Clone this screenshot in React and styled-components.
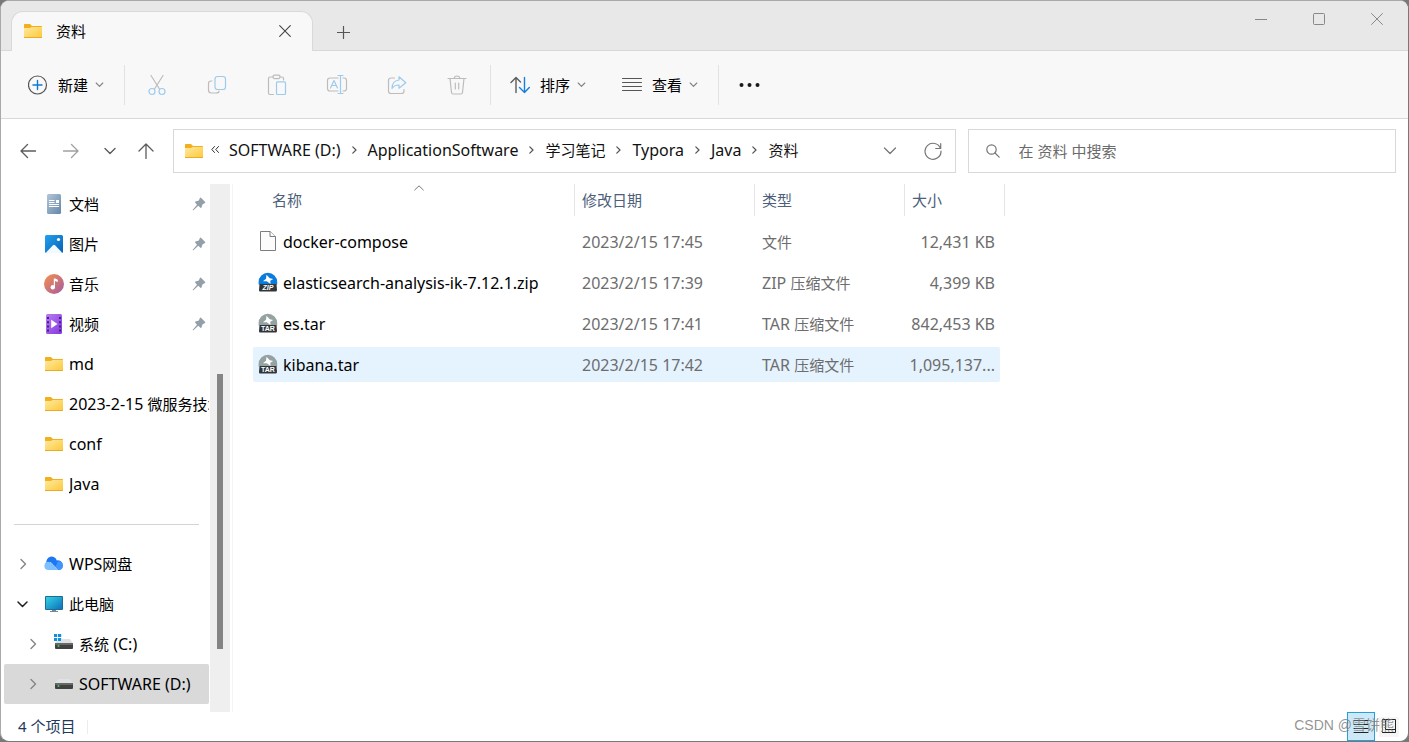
import React from 'react'
import styled, { createGlobalStyle } from 'styled-components'

const GlobalStyle = createGlobalStyle`
  * {
    box-sizing: border-box;
  }
  body {
    margin: 0;
    background-color: #77787a;
    color: #000;
    font-family: 'Noto Sans', 'Noto Sans CJK SC', sans-serif;
    font-size: 15px;
    line-height: 20px;
  }
  button, input {
    margin: 0;
    padding: 0;
    border: none;
    background: none;
    color: inherit;
    font: inherit;
  }
  svg {
    display: block;
    flex: none;
  }
`
const Window = styled.div`
  position: relative;
  display: flex;
  flex-direction: column;
  min-height: 100vh;
  border: 1px solid #a9a9a9;
  border-right-color: #77787a;
  border-bottom-color: #77787a;
  border-radius: 9px;
  background-color: #fff;
  overflow: hidden;
`
const Latin = styled.span`
  font-size: 16px;
`

/* title bar */
const TitleBar = styled.header`
  display: flex;
  align-items: flex-end;
  height: 50px;
  padding-left: 10px;
  background-color: #e8e8e8;
  box-shadow: inset 0 -1px #d9d9d9;
`
const Tab = styled.div`
  display: flex;
  align-items: center;
  width: 302px;
  height: 40px;
  padding: 0 21px 2px 11px;
  border: 1px solid #d9d9d9;
  border-bottom: none;
  border-radius: 12px 12px 0 0;
  background-color: #f8f8f8;
`
const TabTitle = styled.span`
  flex: 1;
  margin-left: 13px;
`
const NewTabButton = styled.button`
  display: grid;
  place-items: center;
  width: 40px;
  height: 38px;
  margin-left: 10px;
`
const Caption = styled.div`
  display: flex;
  align-self: flex-start;
  margin-left: auto;
  padding-right: 2px;
`
const CaptionButton = styled.button`
  display: grid;
  place-items: center;
  width: 58px;
  height: 36px;
`

/* toolbar */
const Toolbar = styled.div`
  display: flex;
  align-items: center;
  height: 68px;
  padding: 0 26px 0 27px;
  border-bottom: 1px solid #d9d9d9;
  background-color: #f8f8f8;
`
const MenuButton = styled.button`
  display: flex;
  align-items: center;
  gap: 10px;
  height: 40px;
  margin-right: ${({ $last }) => $last ? '0' : '36px'};

  svg:last-child {
    margin-left: -3px;
  }
`
const ToolButton = styled.button`
  display: grid;
  place-items: center;
  width: 60px;
  height: 40px;
`
const ToolGroup = styled.div`
  display: flex;
  padding: 0 3px 0 2px;
`
const Divider = styled.div`
  width: 1px;
  height: 40px;
  margin: 0 ${({ $after }) => $after}px 0 ${({ $before }) => $before}px;
  background-color: #e2e2e2;
`

/* address row */
const AddressRow = styled.div`
  display: flex;
  align-items: center;
  height: 65px;
  padding: 0 12px 2px 5px;
`
const NavButton = styled.button`
  display: grid;
  place-items: center;
  width: ${({ $narrow }) => $narrow ? '36px' : '43px'};
  height: 40px;
`
const AddressBox = styled.nav`
  display: flex;
  flex: 29 1 0;
  align-items: center;
  min-width: 0;
  height: 44px;
  margin: 0 12px 0 9px;
  padding: 0 12px 0 10px;
  border: 1px solid #d9d9d9;
`
const Crumbs = styled.ol`
  display: flex;
  flex: 1;
  align-items: center;
  margin: 0;
  padding: 0 0 2px 7px;
  list-style: none;
  white-space: nowrap;
`
const Crumb = styled.li`
  display: flex;
  align-items: center;
`
const Overflow = styled.span`
  margin-right: 10px;
`
const Separator = styled.span`
  margin: 0 11px;
`
const CrumbLink = styled.a`
  color: #111;
  text-decoration: none;
`
const BoxButton = styled.button`
  display: grid;
  place-items: center;
  width: ${({ $wide }) => $wide ? '66px' : '20px'};
  height: 40px;
`
const SearchBox = styled.label`
  display: flex;
  flex: 15 1 0;
  align-items: center;
  min-width: 0;
  height: 44px;
  padding: 0 17px;
  border: 1px solid #d9d9d9;
`
const SearchInput = styled.input`
  flex: 1;
  min-width: 0;
  margin-left: 19px;
  outline: none;

  &::placeholder {
    color: #6a6a6a;
    opacity: 1;
  }
`

/* body */
const Body = styled.div`
  display: flex;
  flex: 1;
`
const Sidebar = styled.aside`
  flex: none;
  width: 208px;
  padding-left: 3px;
`
const Tree = styled.ul`
  margin: 0;
  padding: 0;
  list-style: none;
`
const TreeItem = styled.li`
  display: flex;
  align-items: center;
  height: 40px;
  padding-left: ${({ $level }) => $level * 10 + 9}px;
  padding-right: ${({ $pinned }) => $pinned ? '3px' : '0'};
  border-radius: 2px;
  background-color: ${({ $selected }) => $selected ? '#d9d9d9' : 'transparent'};
`
const Expander = styled.button`
  flex: none;
  width: 31px;
  height: 12px;
  padding-left: 4px;
`
const TreeLabel = styled.span`
  flex: 1;
  margin-left: 5px;
  overflow: hidden;
  white-space: nowrap;
`
const TreeLine = styled.hr`
  height: 1px;
  margin: 20px 10px 19px;
  border: none;
  background-color: #d4d4d4;
`
const Track = styled.div`
  flex: none;
  width: 20px;
  margin-left: 1px;
  padding: 190px 7px 0;
  background-color: #efefef;
`
const Thumb = styled.div`
  width: 6px;
  height: 275px;
  background-color: #858585;
`
const Main = styled.main`
  flex: 1;
  min-width: 0;
  margin-left: 2px;
  padding-left: 20px;
  border-left: 1px solid #f5f5f5;
`
const FileTable = styled.table`
  display: block;
`
const Head = styled.thead`
  display: block;
`
const FileList = styled.tbody`
  display: flex;
  flex-direction: column;
  gap: 6px;
  padding-top: 8px;
`
const HeadRow = styled.tr`
  display: grid;
  grid-template-columns: 322px 180px 150px 100px;
  height: 32px;
`
const HeadCell = styled.th`
  position: relative;
  display: flex;
  align-items: center;
  padding: 0 0 0 ${({ $first }) => $first ? '19px' : '7px'};
  border-right: 1px solid #e5e5e5;
  color: #4c607a;
  font-weight: 400;
`
const SortMark = styled.span`
  position: absolute;
  top: 1px;
  left: 50%;
`
const FileRow = styled.tr`
  display: grid;
  grid-template-columns: 322px 180px 150px 95px;
  width: 747px;
  height: 35px;
  border-radius: 2px;
  background-color: ${({ $hovered }) => $hovered ? '#e5f3ff' : 'transparent'};
`
const Cell = styled.td`
  padding: 8px 0 0 7px;
  color: #6d6d6d;
  white-space: nowrap;
`
const NameCell = styled(Cell)`
  display: flex;
  align-items: flex-start;
  gap: 5px;
  padding-left: 5px;
  color: #000;

  svg {
    margin-top: -1px;
  }
`
const SizeCell = styled(Cell)`
  padding-right: 5px;
  padding-left: 0;
  text-align: right;
`

/* status bar */
const StatusBar = styled.footer`
  display: flex;
  align-items: center;
  height: 29px;
  padding: 0 8px 0 17px;
  color: #1e395b;
`
const StatusText = styled.span`
  padding-bottom: 2px;
`
const StatusDivider = styled.span`
  width: 1px;
  height: 14px;
  margin-left: 12px;
  background-color: #ececec;
`
const ViewButtons = styled.div`
  display: flex;
  align-items: center;
  gap: 4px;
  margin-left: auto;
`
const ViewButton = styled.button`
  display: grid;
  place-items: center;
  width: ${({ $active }) => $active ? '28px' : '20px'};
  height: ${({ $active }) => $active ? '29px' : '20px'};
  margin-right: ${({ $active }) => $active ? '0' : '1px'};
  padding-bottom: 2px;
  border: ${({ $active }) => $active ? '1px solid #26a0da' : 'none'};
  background-color: ${({ $active }) => $active ? '#cde9f7' : '#f5f5f5'};
`
const Watermark = styled.span`
  position: absolute;
  right: 14px;
  bottom: 6px;
  color: rgba(120, 120, 120, 0.8);
  font-family: 'Liberation Sans', 'Noto Sans CJK SC', sans-serif;
  font-size: 14px;
  pointer-events: none;
`

const Stroke = ({ w, h, d, color = '#5c5c5c', width = 1.2, children }) => (
  <svg width={w} height={h} viewBox={`0 0 ${w} ${h}`} fill='none' stroke={color} strokeWidth={width} strokeLinecap='round' strokeLinejoin='round'>
    {d && <path d={d} />}
    {children}
  </svg>
)

const GREY = '#bcbcbc'
const BLUE = '#9ccbee'

const ChevronDown = () => <Stroke w={9} h={6} d='M1.200 1L4.500 4.300L7.800 1' color='#808080' width={1.1} />
const BigChevron = () => <Stroke w={14} h={8} d='M1.500 1L7 6.500L12.500 1' color='#777' width={1.3} />
const CrumbChevron = () => <Stroke w={5} h={8} d='M.8 .8L4 4L.8 7.200' color='#555' width={1.2} />
const TreeChevron = () => <Stroke w={12} h={12} d='M4 1.500L8.500 6L4 10.500' color='#858585' width={1.4} />
const TreeChevronOpen = () => <Stroke w={12} h={12} d='M1 4L5.500 8.500L10 4' color='#222' width={1.5} />

const FolderIcon = () => (
  <svg width='20' height='20' viewBox='0 0 20 20'>
    <defs>
      <linearGradient id='folder' x1='0' y1='0' x2='1' y2='1'>
        <stop offset='0' stopColor='#ffe9a0' />
        <stop offset='1' stopColor='#fcc838' />
      </linearGradient>
    </defs>
    <path d='M1 3.600Q1 3 1.600 3H7L9 5H18.400Q19 5 19 5.600V10H1Z' fill='#f2b01e' />
    <path d='M1 7H7L8.500 6H19V16.400Q19 17 18.400 17H1.600Q1 17 1 16.400Z' fill='url(#folder)' />
    <path d='M1 16.500H19' stroke='#e9ac2a' />
  </svg>
)
const DocumentIcon = () => (
  <svg width='20' height='20' viewBox='0 0 20 20'>
    <defs>
      <linearGradient id='doc' x1='0' y1='0' x2='1' y2='1'>
        <stop offset='0' stopColor='#b3c6da' />
        <stop offset='1' stopColor='#6486a8' />
      </linearGradient>
    </defs>
    <rect x='3' width='14' height='20' rx='1.500' fill='url(#doc)' />
    <path d='M5 6.500H10.500M5 8.500H10.500M5 10.500H15M5 12.500H15' stroke='#fff' />
    <rect x='12' y='6' width='3' height='3' fill='#fff' />
  </svg>
)
const PictureIcon = () => (
  <svg width='20' height='20' viewBox='0 0 20 20'>
    <defs>
      <linearGradient id='pic' x1='0' y1='0' x2='1' y2='1'>
        <stop offset='0' stopColor='#22a2ee' />
        <stop offset='1' stopColor='#0860b4' />
      </linearGradient>
    </defs>
    <rect x='1' y='1' width='18' height='18' rx='1.500' fill='url(#pic)' />
    <path d='M2 18.500L9 11.300Q10 10.300 11 11.300L18 18.500Q17.500 19 17 19H3Q2.500 19 2 18.500Z' fill='#f2f9ff' />
    <circle cx='14.500' cy='5.500' r='1.600' fill='#fff' />
  </svg>
)
const MusicIcon = () => (
  <svg width='20' height='20' viewBox='0 0 20 20'>
    <defs>
      <linearGradient id='music' x1='0' y1='0' x2='1' y2='1'>
        <stop offset='.1' stopColor='#ee8c52' />
        <stop offset='1' stopColor='#a55aa4' />
      </linearGradient>
    </defs>
    <circle cx='10' cy='10' r='10' fill='url(#music)' />
    <circle cx='8.800' cy='13.200' r='2.200' fill='#fff' />
    <path d='M9.800 4.500H11.300L13.800 5.800V8L11 7V13.200H9.800Z' fill='#fff' />
  </svg>
)
const VideoIcon = () => (
  <svg width='20' height='20' viewBox='0 0 20 20'>
    <defs>
      <linearGradient id='video' x1='0' y1='0' x2='1' y2='1'>
        <stop offset='0' stopColor='#b77cf2' />
        <stop offset='1' stopColor='#8439dd' />
      </linearGradient>
    </defs>
    <rect x='2' width='16' height='20' rx='1.500' fill='url(#video)' />
    <path d='M4 3V18M16 3V18' stroke='#45207f' strokeWidth='2' strokeDasharray='2 2.200' />
    <path d='M7.200 5.800L13.500 10L7.200 14.200Z' fill='#fff' />
  </svg>
)
const CloudIcon = () => (
  <svg width='20' height='20' viewBox='0 0 20 20'>
    <path d='M2.500 9.500A5.300 5.300 0 0 1 12.800 6.500A4.800 4.800 0 0 1 15 16H6Z' fill='#1c78f2' />
    <path d='M14 7.300A4.400 4.400 0 0 1 15.300 16H10Z' fill='#3e95ff' />
    <path d='M4.500 16A4.100 4.100 0 0 1 4.500 7.800Q7 8 9 11L13 16Z' fill='#7fc0ff' />
    <path d='M6 8.300Q8.500 9.300 13.500 16' stroke='#e8f4ff' strokeWidth='.6' fill='none' />
  </svg>
)
const ComputerIcon = () => (
  <svg width='20' height='20' viewBox='0 0 20 20'>
    <defs>
      <linearGradient id='pc' x1='0' y1='0' x2='1' y2='1'>
        <stop offset='0' stopColor='#35d3e2' />
        <stop offset='1' stopColor='#0d70bd' />
      </linearGradient>
    </defs>
    <path d='M8 15H12V17H14V18H6V17H8Z' fill='#7b8790' />
    <rect x='1' y='2' width='18' height='14' rx='1' fill='#1b6c97' />
    <rect x='2' y='3' width='16' height='12' fill='url(#pc)' />
  </svg>
)
const DriveIcon = ({ system }) => (
  <svg width='20' height='20' viewBox='0 0 20 20'>
    <path d='M4 5H16L19 9.500H1Z' fill='#dfe1e3' />
    <rect x='1' y='9' width='18' height='6' rx='1' fill='#414141' />
    <rect x='1' y='9' width='18' height='2' rx='1' fill='#686868' />
    <circle cx='4.500' cy='12' r='1' fill='#3fd06c' />
    {system && <path d='M0 -1H8V7H0Z' fill='#fff' />}
    {system && <path d='M0 0H3.200V3H0ZM4 0H7.200V3H4ZM0 4H3.200V7H0ZM4 4H7.200V7H4Z' fill='#128fdc' />}
  </svg>
)
const PinIcon = () => (
  <svg width='14' height='14' viewBox='0 0 14 14'>
    <path d='M8 .8Q8.500 .4 9 .8L13.200 5Q13.500 5.500 13 5.900L10.600 7.200L9.500 10.600Q9 11.200 8.400 10.700L6.300 8.800L1.200 13.500L.6 12.900L5 7.700L3.200 5.700Q2.800 5 3.500 4.600L6.800 3.500Z' fill='#93a0a9' />
  </svg>
)
const FileIcon = () => (
  <svg width='20' height='20' viewBox='0 0 20 20' fill='#fcfcfc' stroke='#7d7d7d'>
    <path d='M2.500 .5H12L17.500 5.500V19.500H2.500Z' />
    <path d='M12 .5V5.500H17.500' />
  </svg>
)
const ArchiveIcon = ({ kind }) => (
  <svg width='20' height='20' viewBox='0 0 20 20'>
    <path d='M.6 12.500V10A9.300 9.300 0 0 1 19.200 10V12.500Z' fill={kind === 'ZIP' ? '#0b7bdc' : '#94a2a1'} />
    <path d='M8.500 2.800L11.800 6.200L15.200 7L12.300 8.800L12.500 12L8.800 9.300L5 9.300L8 6.800Z' fill='#fff' />
    <path d='M1.500 12H18.500L19 18Q19 19.500 17.500 19.500H2.200Q.8 19.500 1 18Z' fill='#30363a' />
    <text
      x='10'
      y='18.300'
      textAnchor='middle'
      fill='#fff'
      fontFamily='Liberation Sans, sans-serif'
      fontSize='7'
      fontWeight='700'
      fontStyle={kind === 'ZIP' ? 'italic' : 'normal'}
    >
      {kind}
    </text>
  </svg>
)

const quickAccess = [
  { name: '文档', icon: <DocumentIcon />, pinned: true },
  { name: '图片', icon: <PictureIcon />, pinned: true },
  { name: '音乐', icon: <MusicIcon />, pinned: true },
  { name: '视频', icon: <VideoIcon />, pinned: true },
  { name: 'md', icon: <FolderIcon /> },
  { name: '2023-2-15 微服务技术', icon: <FolderIcon /> },
  { name: 'conf', icon: <FolderIcon /> },
  { name: 'Java', icon: <FolderIcon /> }
]

const drives = [
  { name: 'WPS网盘', icon: <CloudIcon />, expandable: true },
  { name: '此电脑', icon: <ComputerIcon />, expandable: true, open: true },
  { name: '系统 (C:)', icon: <DriveIcon system />, level: 1, expandable: true },
  { name: 'SOFTWARE (D:)', icon: <DriveIcon />, level: 1, expandable: true, selected: true }
]

const crumbs = ['SOFTWARE (D:)', 'ApplicationSoftware', '学习笔记', 'Typora', 'Java', '资料']

const files = [
  { name: 'docker-compose', date: '2023/2/15 17:45', type: '文件', size: '12,431 KB' },
  { name: 'elasticsearch-analysis-ik-7.12.1.zip', date: '2023/2/15 17:39', kind: 'ZIP', type: 'ZIP 压缩文件', size: '4,399 KB' },
  { name: 'es.tar', date: '2023/2/15 17:41', kind: 'TAR', type: 'TAR 压缩文件', size: '842,453 KB' },
  { name: 'kibana.tar', date: '2023/2/15 17:42', kind: 'TAR', type: 'TAR 压缩文件', size: '1,095,137...', hovered: true }
]

// Latin runs are set one size above the Chinese ones so both look equally large
const Mixed = ({ children }) => children.split(/([\u4e00-\u9fff]+)/).filter(Boolean).map((part, i) => (
  /[\u4e00-\u9fff]/.test(part) ? part : <Latin key={i}>{part}</Latin>
))

const TreeNode = ({ name, icon, level = 0, pinned, expandable, open, selected }) => (
  <TreeItem $level={level} $pinned={pinned} $selected={selected}>
    <Expander as={expandable ? 'button' : 'span'} aria-label={expandable ? name : undefined}>
      {expandable && (open ? <TreeChevronOpen /> : <TreeChevron />)}
    </Expander>
    {icon}
    <TreeLabel><Mixed>{name}</Mixed></TreeLabel>
    {pinned && <PinIcon />}
  </TreeItem>
)

const TitleSection = () => (
  <TitleBar>
    <Tab>
      <FolderIcon />
      <TabTitle>资料</TabTitle>
      <button aria-label='关闭标签页'>
        <Stroke w={12} h={12} d='M.7 .7L11.300 11.300M11.300 .7L.7 11.300' color='#444' width={1.1} />
      </button>
    </Tab>
    <NewTabButton aria-label='新标签页'>
      <Stroke w={13} h={13} d='M6.500 .5V12.500M.5 6.500H12.500' color='#555' />
    </NewTabButton>
    <Caption>
      <CaptionButton aria-label='最小化'><Stroke w={12} h={12} d='M0 6.500H12' color='#888' width={1} /></CaptionButton>
      <CaptionButton aria-label='最大化'>
        <Stroke w={12} h={12} color='#888' width={1}><rect x='.5' y='.5' width='11' height='11' rx='1' /></Stroke>
      </CaptionButton>
      <CaptionButton aria-label='关闭'><Stroke w={12} h={12} d='M.5 .5L11.500 11.500M11.500 .5L.5 11.500' color='#888' width={1} /></CaptionButton>
    </Caption>
  </TitleBar>
)

const ToolbarSection = () => (
  <Toolbar>
    <MenuButton $last>
      <Stroke w={20} h={20} color='#555'>
        <circle cx='9.500' cy='10' r='9' />
        <path d='M9.500 5.500V14.500M5 10H14' stroke='#0f78d0' strokeWidth='1.4' />
      </Stroke>
      新建
      <ChevronDown />
    </MenuButton>
    <Divider $before={20} $after={0} />
    <ToolGroup>
      <ToolButton aria-label='剪切'>
        <Stroke w={20} h={22} color={GREY}>
          <path d='M4 1.500L12.500 15M16 1.500L7.500 15' />
          <circle cx='5' cy='17.500' r='3' stroke={BLUE} />
          <circle cx='15' cy='17.500' r='3' stroke={BLUE} />
        </Stroke>
      </ToolButton>
      <ToolButton aria-label='复制'>
        <Stroke w={20} h={20} color={GREY}>
          <path d='M5 6H4Q1.500 6 1.500 8.500V15Q1.500 18 4.500 18H9Q12 18 12 16' />
          <rect x='8' y='1.500' width='10.500' height='13' rx='2.500' stroke={BLUE} />
        </Stroke>
      </ToolButton>
      <ToolButton aria-label='粘贴'>
        <Stroke w={20} h={22} color={GREY}>
          <path d='M6 3H3Q1.500 3 1.500 4.500V19Q1.500 20.500 3 20.500H6.500M13 3H15Q16.500 3 16.500 4.500V6' />
          <rect x='6' y='1.200' width='7' height='3.400' rx='1.500' />
          <rect x='9.500' y='7.800' width='9' height='12.700' rx='1' stroke={BLUE} />
        </Stroke>
      </ToolButton>
      <ToolButton aria-label='重命名'>
        <Stroke w={22} h={22} color={GREY}>
          <path d='M12 4H4Q1.500 4 1.500 6.500V14.500Q1.500 17 4 17H12M17 4H18Q20.500 4 20.500 6.500V14.500Q20.500 17 18 17H17' />
          <path d='M4.500 14L8 6.500L11.500 14M5.700 11.500H10.300M14.500 1.500V19.500M12 1.500H17M12 19.500H17' stroke={BLUE} />
        </Stroke>
      </ToolButton>
      <ToolButton aria-label='共享'>
        <Stroke w={20} h={20} color={GREY}>
          <path d='M7.500 3H4Q1.500 3 1.500 5.500V16Q1.500 18.500 4 18.500H14.500Q17 18.500 17 16V14.500' />
          <path d='M12 5V1.800L18.800 7.700L12 13.200V10Q7.500 9.800 5 13.500Q5 5.800 12 5Z' stroke={BLUE} />
        </Stroke>
      </ToolButton>
      <ToolButton aria-label='删除'>
        <Stroke w={20} h={20} color={GREY}>
          <path d='M1 3.500H19M7 3.500Q7.500 1 10 1T13 3.500M3 3.500L4.500 17.500Q4.700 19 6 19H14Q15.300 19 15.500 17.500L17 3.500M8.300 8V14M11.700 8V14' />
        </Stroke>
      </ToolButton>
    </ToolGroup>
    <Divider $before={0} $after={19} />
    <MenuButton>
      <Stroke w={20} h={18} width={1.4}>
        <path d='M6 16.500V1.500M1 6.500L6 1.500L10.500 6' />
        <path d='M14.500 1.500V16.500M9.500 11.500L14.500 16.500L19.300 11.500' stroke='#1580dc' />
      </Stroke>
      排序
      <ChevronDown />
    </MenuButton>
    <MenuButton $last>
      <Stroke w={20} h={14} d='M.5 .5H19.500M.5 4.500H19.500M.5 8.500H19.500M.5 12.500H19.500' width={1} color='#555' />
      查看
      <ChevronDown />
    </MenuButton>
    <Divider $before={20} $after={20} />
    <button aria-label='更多'>
      <svg width='21' height='6' viewBox='0 0 21 6' fill='#1a1a1a'>
        <circle cx='2.500' cy='3' r='2' />
        <circle cx='10.500' cy='3' r='2' />
        <circle cx='18.500' cy='3' r='2' />
      </svg>
    </button>
  </Toolbar>
)

const AddressSection = () => (
  <AddressRow>
    <NavButton aria-label='后退'><Stroke w={16} h={16} d='M15.500 8H1M7.500 1.500L1 8L7.500 14.500' width={1.3} /></NavButton>
    <NavButton aria-label='前进'><Stroke w={16} h={16} d='M.5 8H15M8.500 1.500L15 8L8.500 14.500' color='#a0a0a0' width={1.3} /></NavButton>
    <NavButton $narrow aria-label='最近位置'><Stroke w={12} h={8} d='M1 1.500L6 6.500L11 1.500' width={1.4} /></NavButton>
    <NavButton $narrow aria-label='向上'><Stroke w={16} h={16} d='M8 15.500V1M1 8L8 1L15 8' width={1.3} /></NavButton>
    <AddressBox>
      <FolderIcon />
      <Crumbs>
        {crumbs.map((crumb, i) => (
          <Crumb key={crumb}>
            {i === 0
              ? <Overflow><Stroke w={8} h={8} d='M3.500 .5L.8 3.500L3.500 6.500M7.500 .5L4.800 3.500L7.500 6.500' color='#333' width={1} /></Overflow>
              : <Separator><CrumbChevron /></Separator>}
            <CrumbLink href='#'><Mixed>{crumb}</Mixed></CrumbLink>
          </Crumb>
        ))}
      </Crumbs>
      <BoxButton $wide aria-label='历史记录'><BigChevron /></BoxButton>
      <BoxButton aria-label='刷新'>
        <Stroke w={18} h={18} d='M16.500 6.500A8 8 0 1 0 17 9M16.700 1.500V6.500H11.700' color='#777' />
      </BoxButton>
    </AddressBox>
    <SearchBox>
      <Stroke w={14} h={14} color='#777'>
        <circle cx='5.500' cy='5.500' r='4.700' />
        <path d='M9 9L13.200 13.200' />
      </Stroke>
      <SearchInput type='search' placeholder='在 资料 中搜索' aria-label='搜索' />
    </SearchBox>
  </AddressRow>
)

const FileSection = () => (
  <Main>
    <FileTable>
      <Head>
        <HeadRow>
          <HeadCell $first>名称<SortMark><Stroke w={10} h={6} d='M.7 5L5 .8L9.300 5' color='#777' width={1} /></SortMark></HeadCell>
          <HeadCell>修改日期</HeadCell>
          <HeadCell>类型</HeadCell>
          <HeadCell>大小</HeadCell>
        </HeadRow>
      </Head>
      <FileList>
        {files.map(({ name, date, kind, type, size, hovered }) => (
          <FileRow key={name} $hovered={hovered}>
            <NameCell>
              {kind ? <ArchiveIcon kind={kind} /> : <FileIcon />}
              <Latin>{name}</Latin>
            </NameCell>
            <Cell><Latin>{date}</Latin></Cell>
            <Cell><Mixed>{type}</Mixed></Cell>
            <SizeCell><Latin>{size}</Latin></SizeCell>
          </FileRow>
        ))}
      </FileList>
    </FileTable>
  </Main>
)

export default function App() {
  return (
    <>
      <GlobalStyle />
      <Window>
        <TitleSection />
        <ToolbarSection />
        <AddressSection />
        <Body>
          <Sidebar>
            <Tree>
              {quickAccess.map(item => <TreeNode key={item.name} {...item} />)}
            </Tree>
            <TreeLine />
            <Tree>
              {drives.map(item => <TreeNode key={item.name} {...item} />)}
            </Tree>
          </Sidebar>
          <Track><Thumb /></Track>
          <FileSection />
        </Body>
        <StatusBar>
          <StatusText>4 个项目</StatusText>
          <StatusDivider />
          <ViewButtons>
            <ViewButton $active aria-label='详细信息'>
              <Stroke w={16} h={14} d='M1 1.500H15M1 5.500H15M1 9.500H15M1 13.500H15' color='#222' width={1} />
            </ViewButton>
            <ViewButton aria-label='大图标'>
              <Stroke w={14} h={14} color='#222' width={1}>
                <rect x='.5' y='.5' width='13' height='13' />
                <path d='M3.500 .5V10.500H13.500' />
              </Stroke>
            </ViewButton>
          </ViewButtons>
        </StatusBar>
        <Watermark>CSDN @雪饼熊</Watermark>
      </Window>
    </>
  )
}
